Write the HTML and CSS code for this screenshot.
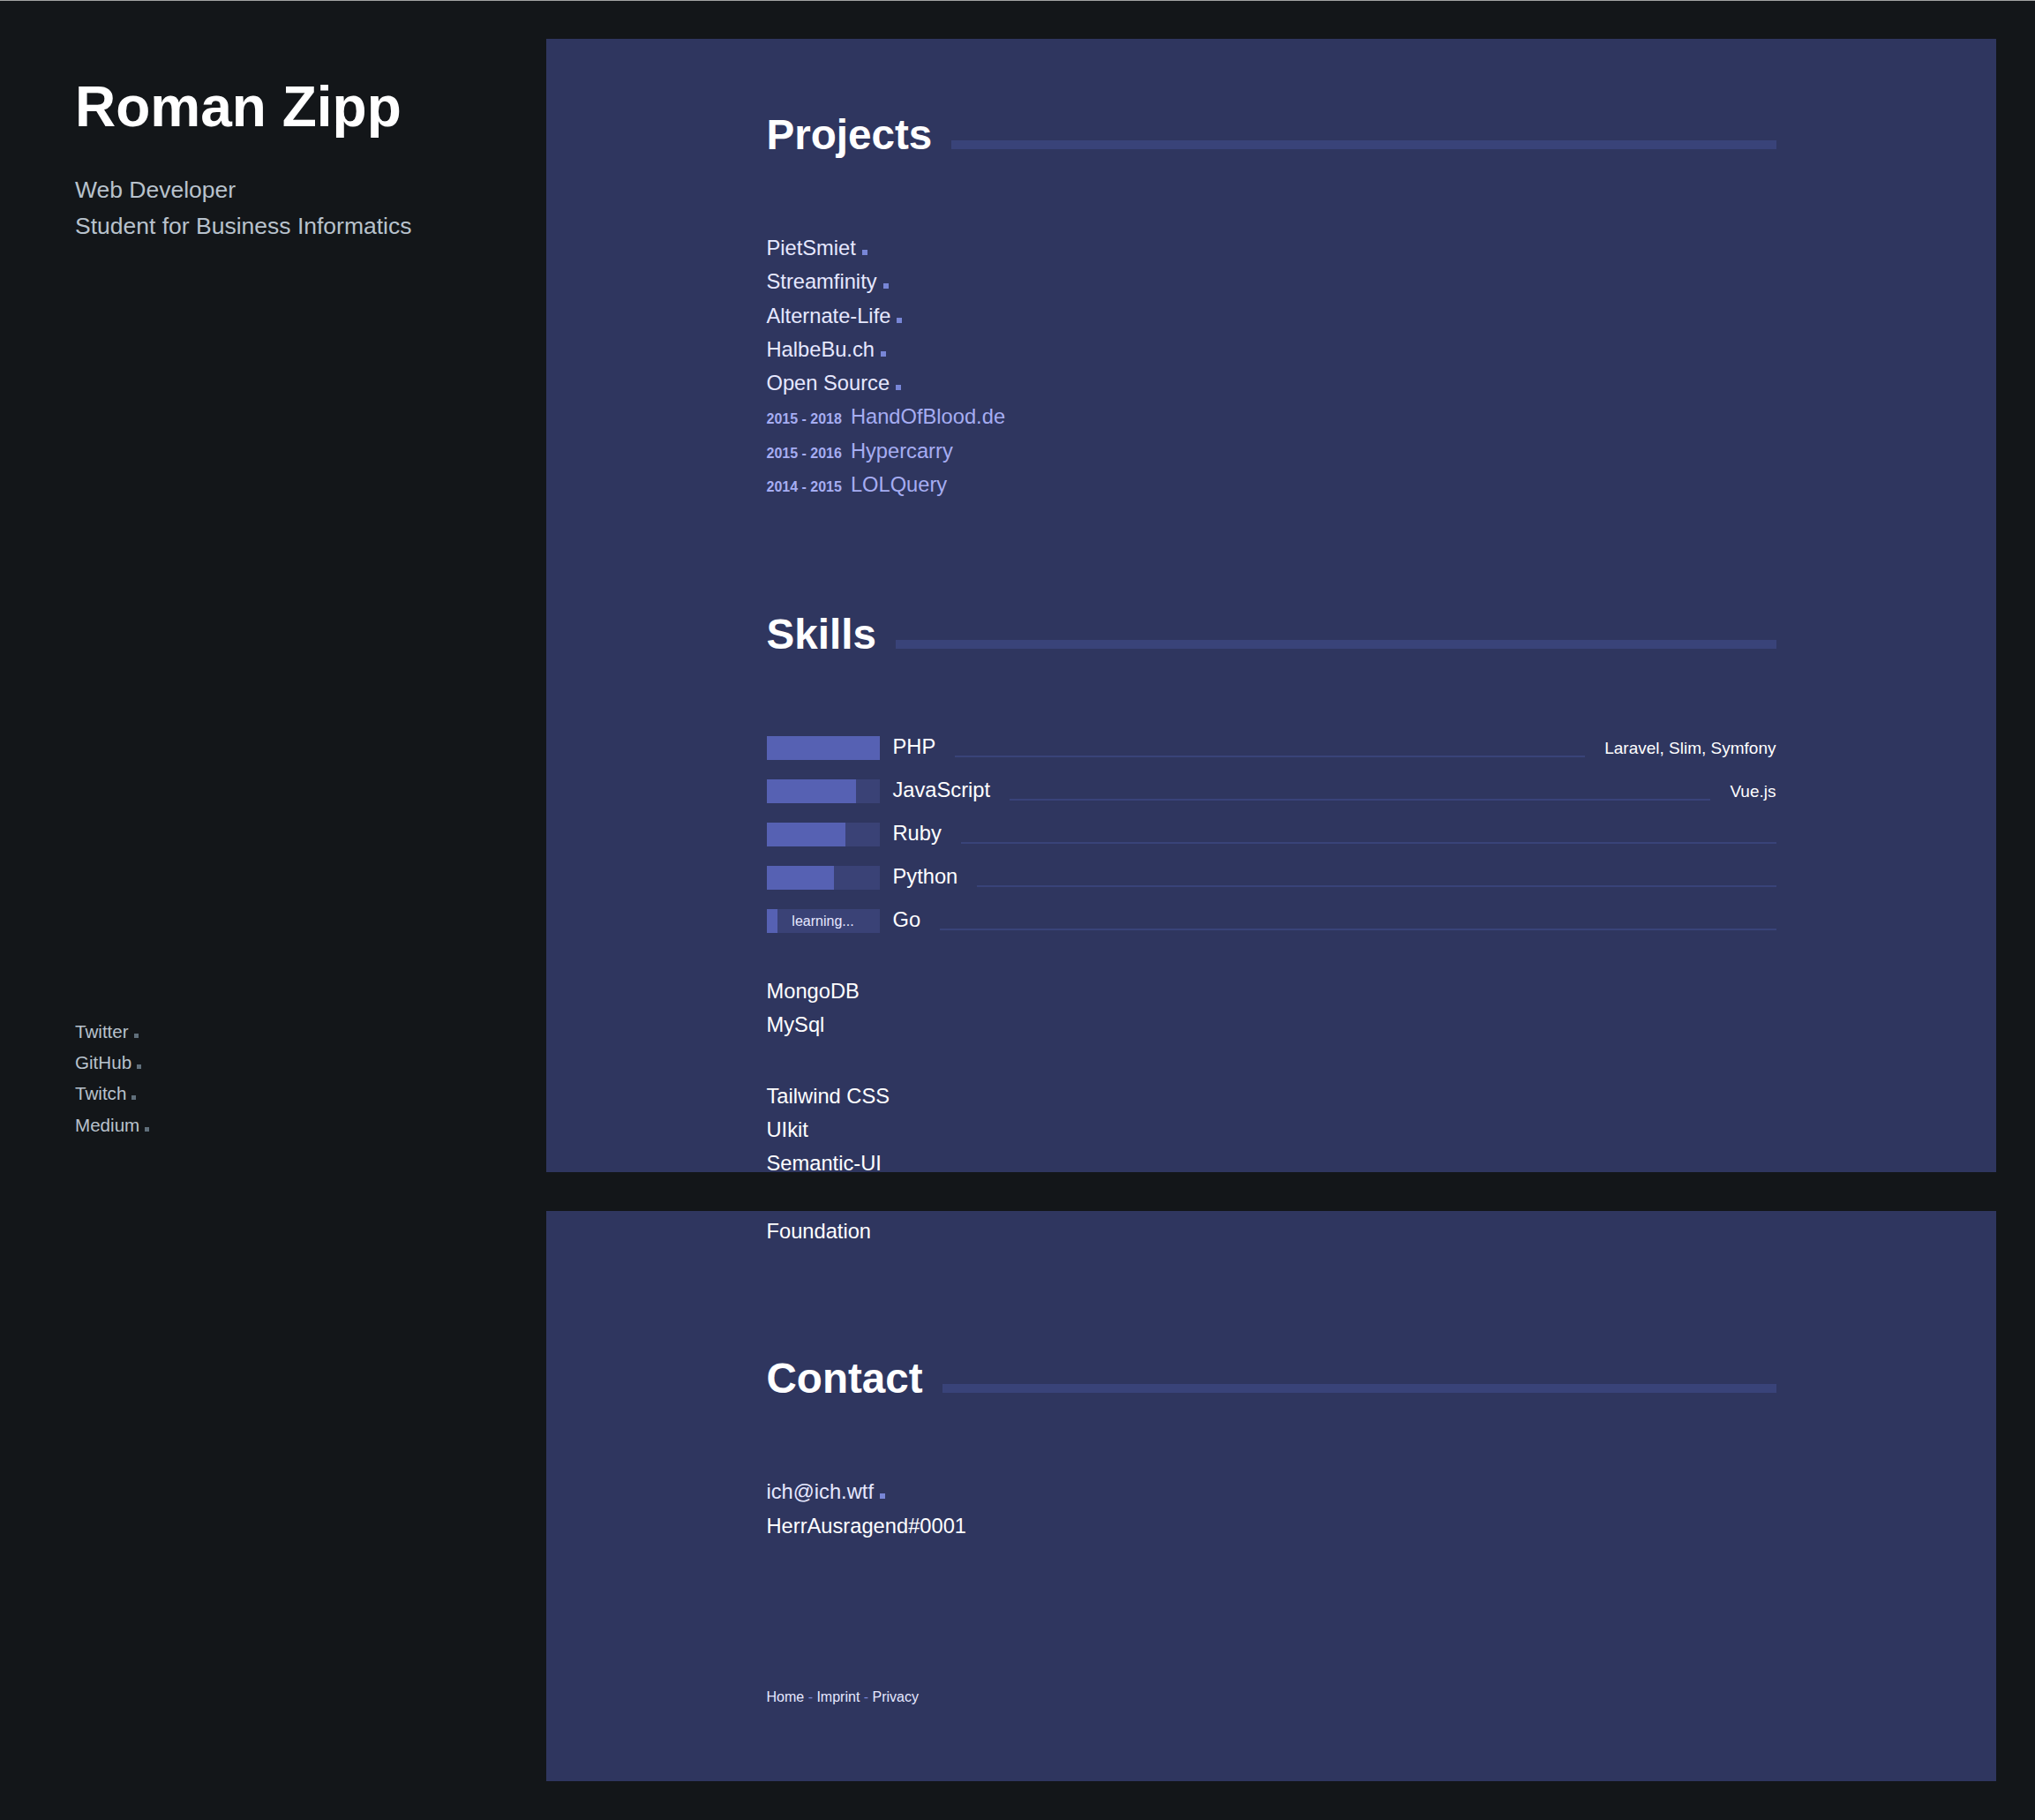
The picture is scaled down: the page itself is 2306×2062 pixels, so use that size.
FILE: index.html
```html
<!DOCTYPE html>
<html lang="en">
<head>
    <meta charset="UTF-8">
    <meta name="viewport" content="width=device-width, initial-scale=1.0">
    <title>Roman Zipp</title>
    <link rel="stylesheet" href="styles.css">
</head>
<body>

<!-- Sidebar: name, role and social links -->
<aside class="sidebar">
    <header class="intro">
        <h1 class="intro-name">Roman Zipp</h1>
        <p class="intro-role">Web Developer<br>Student for Business Informatics</p>
    </header>

    <ul class="social">
        <li><a href="#">Twitter</a><span class="dot"></span></li>
        <li><a href="#">GitHub</a><span class="dot"></span></li>
        <li><a href="#">Twitch</a><span class="dot"></span></li>
        <li><a href="#">Medium</a><span class="dot"></span></li>
    </ul>
</aside>

<main class="main">
    <div class="panel panel-top">
        <div class="content">

            <!-- Projects -->
            <section class="section">
                <div class="section-head">
                    <h2 class="section-title">Projects</h2>
                    <div class="section-rule"></div>
                </div>
                <ul class="list list-first">
                    <li><a class="link" href="#">PietSmiet</a><span class="dot"></span></li>
                    <li><a class="link" href="#">Streamfinity</a><span class="dot"></span></li>
                    <li><a class="link" href="#">Alternate-Life</a><span class="dot"></span></li>
                    <li><a class="link" href="#">HalbeBu.ch</a><span class="dot"></span></li>
                    <li><a class="link" href="#">Open Source</a><span class="dot"></span></li>
                    <li><span class="years">2015 - 2018</span><span class="old">HandOfBlood.de</span></li>
                    <li><span class="years">2015 - 2016</span><span class="old">Hypercarry</span></li>
                    <li><span class="years">2014 - 2015</span><span class="old">LOLQuery</span></li>
                </ul>
            </section>

            <!-- Skills -->
            <section class="section section-next">
                <div class="section-head">
                    <h2 class="section-title">Skills</h2>
                    <div class="section-rule"></div>
                </div>

                <div class="skills">
                    <div class="skill">
                        <div class="meter"><div class="meter-fill" style="width: 100%"></div></div>
                        <div class="skill-info">
                            <span class="skill-name">PHP</span>
                            <span class="skill-rule"></span>
                            <span class="skill-extra">Laravel, Slim, Symfony</span>
                        </div>
                    </div>
                    <div class="skill">
                        <div class="meter"><div class="meter-fill" style="width: 79%"></div></div>
                        <div class="skill-info">
                            <span class="skill-name">JavaScript</span>
                            <span class="skill-rule"></span>
                            <span class="skill-extra">Vue.js</span>
                        </div>
                    </div>
                    <div class="skill">
                        <div class="meter"><div class="meter-fill" style="width: 70%"></div></div>
                        <div class="skill-info">
                            <span class="skill-name">Ruby</span>
                            <span class="skill-rule"></span>
                        </div>
                    </div>
                    <div class="skill">
                        <div class="meter"><div class="meter-fill" style="width: 60%"></div></div>
                        <div class="skill-info">
                            <span class="skill-name">Python</span>
                            <span class="skill-rule"></span>
                        </div>
                    </div>
                    <div class="skill">
                        <div class="meter">
                            <div class="meter-fill" style="width: 10%"></div>
                            <span class="meter-note">learning...</span>
                        </div>
                        <div class="skill-info">
                            <span class="skill-name">Go</span>
                            <span class="skill-rule"></span>
                        </div>
                    </div>
                </div>

                <ul class="list list-db">
                    <li>MongoDB</li>
                    <li>MySql</li>
                </ul>

                <ul class="list list-fw">
                    <li>Tailwind CSS</li>
                    <li>UIkit</li>
                    <li>Semantic-UI</li>
                </ul>
            </section>
        </div>
    </div>

    <div class="panel panel-bottom">
        <div class="content">
            <ul class="list">
                <li>Foundation</li>
            </ul>

            <!-- Contact -->
            <section class="section section-contact">
                <div class="section-head">
                    <h2 class="section-title">Contact</h2>
                    <div class="section-rule"></div>
                </div>
                <ul class="list list-first">
                    <li><a class="link" href="#">ich@ich.wtf</a><span class="dot"></span></li>
                    <li>HerrAusragend#0001</li>
                </ul>
            </section>

            <footer class="footer">
                <a href="#">Home</a> <span class="sep">-</span> <a href="#">Imprint</a> <span class="sep">-</span> <a href="#">Privacy</a>
            </footer>
        </div>
    </div>
</main>

</body>
</html>
```

FILE: styles.css
```css
body {
    margin: 0;
    display: flex;
    align-items: flex-start;
    background: #131619;
    border-top: 1px solid #a3a3a3;
    font-family: "Liberation Sans", Arial, sans-serif;
    color: #fff;
}
a {
    color: inherit;
    text-decoration: none;
}
ul {
    list-style: none;
    margin: 0;
    padding: 0;
}

/* sidebar */
.sidebar {
    width: 619px;
    height: 1371px;
    flex-shrink: 0;
    box-sizing: border-box;
    padding: 88px 0 80px 85px;
    display: flex;
    flex-direction: column;
}
.intro-name {
    margin: 0;
    font-size: 64px;
    line-height: 64px;
    font-weight: bold;
    color: #fff;
}
.intro-role {
    margin: 42px 0 0;
    font-size: 26.5px;
    line-height: 41px;
    color: #b8c2cc;
}
.social {
    margin-top: auto;
    font-size: 20.6px;
    line-height: 35.3px;
    color: #b8c2cc;
}
.social .dot {
    width: 5px;
    height: 5px;
    margin-left: 6px;
    background: #606f7b;
}
.dot {
    display: inline-block;
    width: 6px;
    height: 6px;
    margin-left: 7px;
    background: #7886d7;
}

/* main column */
.main {
    flex: 1;
    padding: 43px 44px 44px 0;
}
.panel {
    background: #2f365f;
    box-sizing: border-box;
}
.panel-top {
    height: 1284px;
    padding-top: 85px;
}
.panel-bottom {
    height: 646px;
    margin-top: 44px;
    padding-top: 4px;
}
.content {
    width: 1144px;
    margin: 0 auto;
}

.section-next {
    margin-top: 127px;
}
.section-contact {
    margin-top: 124px;
}
.section-head {
    display: flex;
    align-items: baseline;
}
.section-title {
    margin: 0;
    font-size: 47.6px;
    line-height: 47px;
    font-weight: bold;
    color: #fff;
}
.section-rule {
    flex: 1;
    height: 10px;
    margin-left: 22px;
    background: #394379;
}

.list {
    font-size: 23.7px;
    line-height: 38.25px;
    color: #fff;
}
.list-first {
    margin-top: 86px;
}
.list-db {
    margin-top: 47px;
}
.list-fw {
    margin-top: 42px;
}
.link {
    color: #e6e8ff;
}
.years {
    margin-right: 10px;
    font-size: 16px;
    line-height: 1;
    font-weight: bold;
    color: #a6adf2;
}
.old {
    color: #a6adf2;
}

/* skill meters */
.skills {
    margin-top: 92px;
    display: flex;
    flex-direction: column;
    gap: 22px;
}
.skill {
    display: flex;
    height: 27px;
}
.meter {
    width: 128px;
    flex-shrink: 0;
    display: grid;
    background: #3a4276;
}
.meter-fill,
.meter-note {
    grid-area: 1 / 1;
}
.meter-fill {
    background: #5661b3;
}
.meter-note {
    justify-self: center;
    align-self: center;
    font-size: 16px;
    color: #e6e8ff;
}
.skill-info {
    flex: 1;
    display: flex;
    align-items: baseline;
    margin-left: 15px;
}
.skill-name {
    font-size: 23.7px;
    line-height: 24px;
    color: #fff;
}
.skill-rule {
    flex: 1;
    align-self: flex-end;
    height: 2px;
    margin: 0 0 3px 22px;
    background: #394379;
}
.skill-extra {
    margin-left: 22px;
    font-size: 19px;
    color: #fff;
}

.footer {
    margin-top: 163px;
    font-size: 16px;
    line-height: 24px;
    color: #e6e8ff;
}
.sep {
    color: #7886d7;
}
```
